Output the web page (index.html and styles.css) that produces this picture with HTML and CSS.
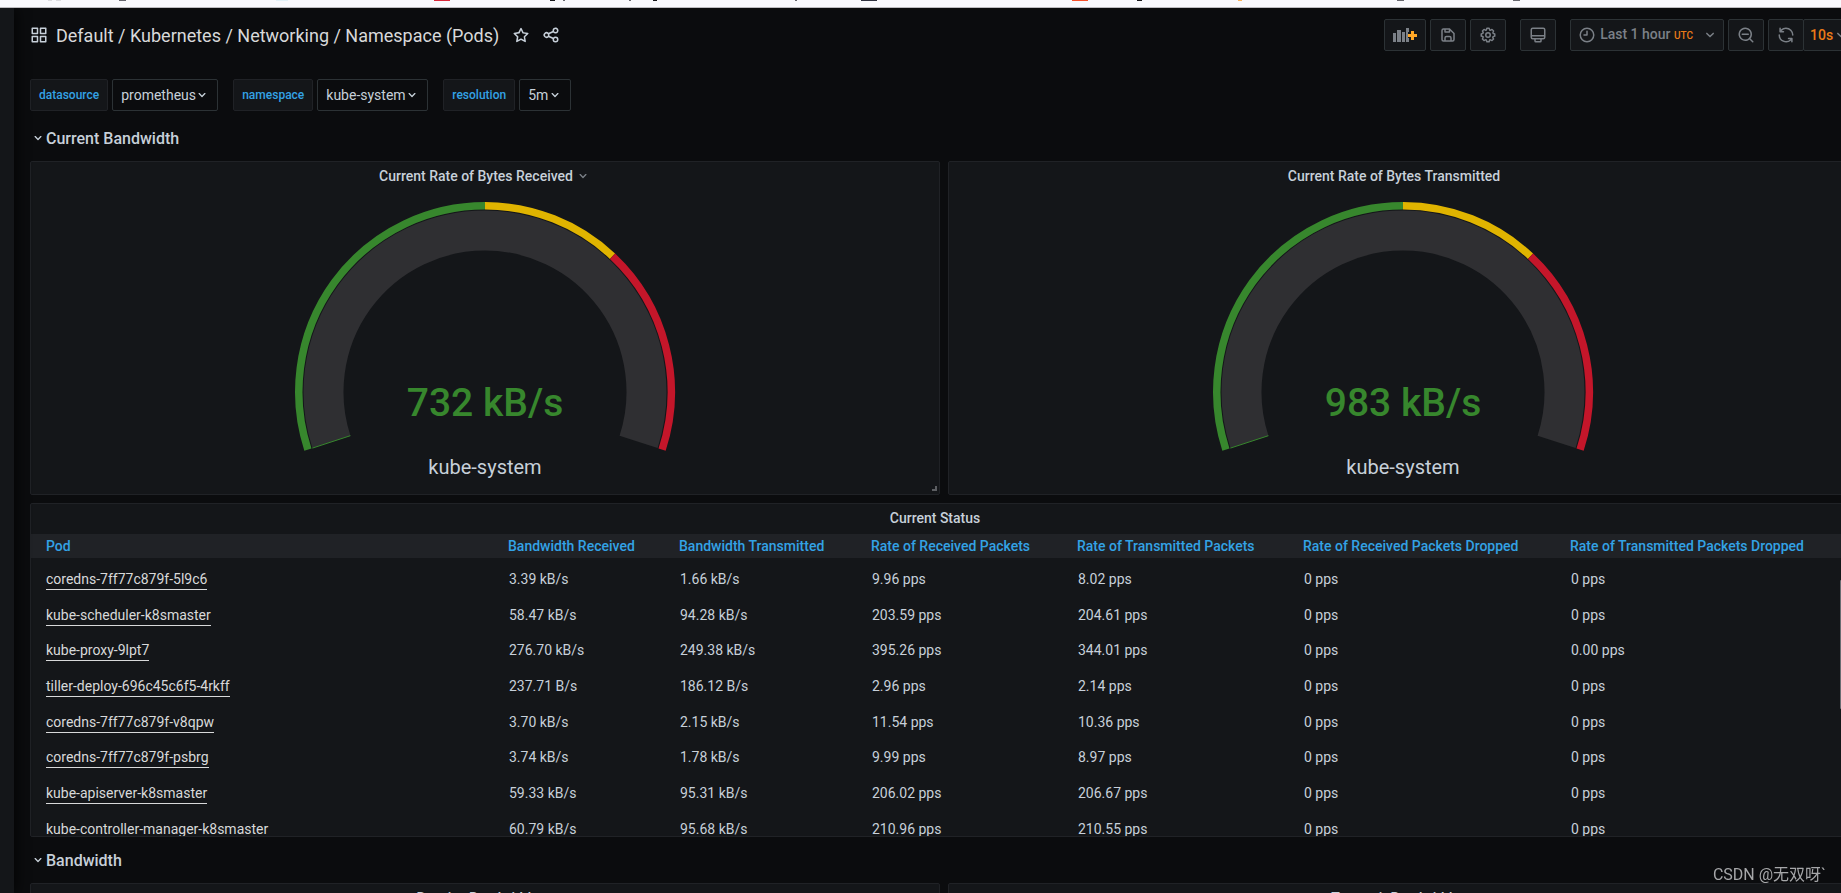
FILE: index.html
```html
<!DOCTYPE html>
<html lang="en">
<head>
<meta charset="utf-8">
<title>Kubernetes / Networking / Namespace (Pods)</title>
<link rel="stylesheet" href="styles.css">
</head>
<body>
<svg class="sprite" aria-hidden="true">
  <symbol id="chevron" viewBox="0 0 24 24"><path d="M17 9.17a1 1 0 0 0-1.41 0L12 12.71 8.46 9.17a1 1 0 0 0-1.41 0 1 1 0 0 0 0 1.42l4.24 4.24a1 1 0 0 0 1.42 0L17 10.59a1 1 0 0 0 0-1.42Z"/></symbol>
  <symbol id="gauge" viewBox="0 0 400 302">
    <g fill="none">
      <path stroke="#2f2f32" stroke-width="40" d="M46.4 249.9A161.5 161.5 0 1 1 353.6 249.9"/>
      <g stroke-width="7.5">
        <path stroke="#37872d" d="M22.9 257.6A186.2 186.2 0 0 1 200 13.8"/>
        <path stroke="#e0b400" d="M200 13.8A186.2 186.2 0 0 1 327.5 64.2"/>
        <path stroke="#c4162a" d="M327.5 64.2A186.2 186.2 0 0 1 377.1 257.6"/>
      </g>
      <path stroke="#37872d" d="M65.4 243.7 27.4 256.1"/>
    </g>
  </symbol>
</svg>
<div class="bookmarks" aria-hidden="true">
  <svg class="bookmark-bits" width="1841" height="1">
    <path fill="#dcdce0" d="M48 0h4v1h-4zM56 0h5v1h-5z"/>
    <path fill="#66666e" d="M119 0h7v1h-7zM563 0h2v1h-2zM629 0h2v1h-2zM795 0h2v1h-2zM1397 0h7v1h-7zM1513 0h7v1h-7z"/>
    <path fill="#e2f1f8" d="M276 0h12v1h-12z"/>
    <path fill="#d9293b" d="M434 0h16v1h-16z"/>
    <path fill="#18181c" d="M550 0h5v1h-5zM653 0h4v1h-4zM1137 0h5v1h-5z"/>
    <path fill="#303240" d="M861 0h16v1h-16z"/>
    <path fill="#f7512c" d="M1072 0h16v1h-16z"/>
    <path fill="#fbb45c" d="M1238 0h4v1h-4z"/>
  </svg>
</div>
<div class="app">
  <aside class="sidebar"></aside>
  <main class="dashboard">
    <header class="navbar">
      <svg class="icon" viewBox="0 0 24 24"><path d="M10 13H3a1 1 0 0 0-1 1v7a1 1 0 0 0 1 1h7a1 1 0 0 0 1-1v-7a1 1 0 0 0-1-1Zm-1 7H4v-5h5ZM21 2h-7a1 1 0 0 0-1 1v7a1 1 0 0 0 1 1h7a1 1 0 0 0 1-1V3a1 1 0 0 0-1-1Zm-1 7h-5V4h5Zm1 4h-7a1 1 0 0 0-1 1v7a1 1 0 0 0 1 1h7a1 1 0 0 0 1-1v-7a1 1 0 0 0-1-1Zm-1 7h-5v-5h5ZM10 2H3a1 1 0 0 0-1 1v7a1 1 0 0 0 1 1h7a1 1 0 0 0 1-1V3a1 1 0 0 0-1-1ZM9 9H4V4h5Z"/></svg>
      <h1 class="page-title"><a href="#">Default</a> / <a href="#">Kubernetes / Networking / Namespace (Pods)</a></h1>
      <button class="plain-button" aria-label="Mark as favorite"><svg class="icon" viewBox="0 0 24 24"><path d="M22 9.67a1 1 0 0 0-.86-.67l-5.69-.83L12.9 3a1 1 0 0 0-1.8 0L8.55 8.16 2.86 9a1 1 0 0 0-.81.68 1 1 0 0 0 .25 1l4.13 4-1 5.68a1 1 0 0 0 1.45 1.07L12 18.76l5.1 2.68a.93.93 0 0 0 .46.12 1 1 0 0 0 .59-.19 1 1 0 0 0 .4-1l-1-5.68 4.13-4a1 1 0 0 0 .32-1.02Zm-6.15 4a1 1 0 0 0-.29.88l.72 4.2-3.76-2a1.06 1.06 0 0 0-.94 0l-3.76 2 .72-4.2a1 1 0 0 0-.29-.88l-3-3 4.21-.61a1 1 0 0 0 .76-.55L12 5.7l1.88 3.82a1 1 0 0 0 .76.55l4.21.61Z"/></svg></button>
      <button class="plain-button" aria-label="Share dashboard"><svg class="icon" viewBox="0 0 24 24"><path d="M18 14a4 4 0 0 0-3.08 1.48l-5.1-2.35a3.64 3.64 0 0 0 0-2.26l5.1-2.35A4 4 0 1 0 14 6a4.17 4.17 0 0 0 .07.71L8.79 9.14a4 4 0 1 0 0 5.72l5.28 2.43A4.17 4.17 0 0 0 14 18a4 4 0 1 0 4-4Zm0-10a2 2 0 1 1-2 2 2 2 0 0 1 2-2ZM6 14a2 2 0 1 1 2-2 2 2 0 0 1-2 2Zm12 6a2 2 0 1 1 2-2 2 2 0 0 1-2 2Z"/></svg></button>
      <div class="toolbar">
        <button class="tool-button add-panel" aria-label="Add panel"><svg class="add-icon" viewBox="0 0 24 14">
          <path fill="#7b8087" d="M0 5h3v9H0zM4 2h4v12H4zM9 4h3v10H9zM13 0h3v4h-1v6h1v4h-3z"/>
          <path fill="#ffa726" d="M18 3h3v3h3v3h-3v3h-3V9h-3V6h3z"/></svg></button>
        <button class="tool-button" aria-label="Save dashboard"><svg class="icon" viewBox="0 0 24 24"><path d="m20.71 9.29-6-6a1 1 0 0 0-.32-.21A1.09 1.09 0 0 0 14 3H6a3 3 0 0 0-3 3v12a3 3 0 0 0 3 3h12a3 3 0 0 0 3-3v-8a1 1 0 0 0-.29-.71ZM9 5h4v2H9Zm6 14H9v-3a1 1 0 0 1 1-1h4a1 1 0 0 1 1 1Zm4-1a1 1 0 0 1-1 1h-1v-3a3 3 0 0 0-3-3h-4a3 3 0 0 0-3 3v3H6a1 1 0 0 1-1-1V6a1 1 0 0 1 1-1h1v3a1 1 0 0 0 1 1h6a1 1 0 0 0 1-1V6.41l4 4Z"/></svg></button>
        <button class="tool-button" aria-label="Dashboard settings"><svg class="icon" viewBox="0 0 24 24"><path d="m21.32 9.55-1.89-.63.89-1.78A1 1 0 0 0 20.13 6L18 3.87a1 1 0 0 0-1.15-.19l-1.78.89-.63-1.89A1 1 0 0 0 13.5 2h-3a1 1 0 0 0-.95.68l-.63 1.89-1.78-.89A1 1 0 0 0 6 3.87L3.87 6a1 1 0 0 0-.19 1.15l.89 1.78-1.89.63a1 1 0 0 0-.68.94v3a1 1 0 0 0 .68.95l1.89.63-.89 1.78A1 1 0 0 0 3.87 18L6 20.13a1 1 0 0 0 1.15.19l1.78-.89.63 1.89a1 1 0 0 0 .95.68h3a1 1 0 0 0 .95-.68l.63-1.89 1.78.89a1 1 0 0 0 1.13-.19L20.13 18a1 1 0 0 0 .19-1.15l-.89-1.78 1.89-.63a1 1 0 0 0 .68-.94v-3a1 1 0 0 0-.68-.95ZM20 12.78l-1.2.4a2 2 0 0 0-1.22 2.88l.57 1.14-1.1 1.1-1.11-.6a2 2 0 0 0-2.88 1.2l-.4 1.1h-1.44l-.4-1.2a2 2 0 0 0-2.88-1.2l-1.14.57-1.1-1.1.6-1.11a2 2 0 0 0-1.2-2.88l-1.1-.3v-1.56l1.2-.4a2 2 0 0 0 1.2-2.88l-.57-1.11 1.1-1.1 1.11.6a2 2 0 0 0 2.88-1.2l.4-1.13h1.56l.4 1.2a2 2 0 0 0 2.88 1.2l1.14-.57 1.1 1.1-.6 1.11a2 2 0 0 0 1.2 2.88l1.2.4ZM12 8a4 4 0 1 0 4 4 4 4 0 0 0-4-4Zm0 6a2 2 0 1 1 2-2 2 2 0 0 1-2 2Z"/></svg></button>
        <button class="tool-button spaced" aria-label="Cycle view mode"><svg class="icon" viewBox="0 0 24 24"><path d="M19 2H5a3 3 0 0 0-3 3v10a3 3 0 0 0 3 3h2v2a2 2 0 0 0 2 2h6a2 2 0 0 0 2-2v-2h2a3 3 0 0 0 3-3V5a3 3 0 0 0-3-3Zm-4 18H9v-2h6Zm5-5a1 1 0 0 1-1 1H5a1 1 0 0 1-1-1v-1h16Zm0-3H4V5a1 1 0 0 1 1-1h14a1 1 0 0 1 1 1Z"/></svg></button>
        <button class="tool-button time-picker spaced"><svg class="icon" viewBox="0 0 24 24"><path d="M12 2a10 10 0 1 0 10 10A10 10 0 0 0 12 2Zm0 18a8 8 0 1 1 8-8 8 8 0 0 1-8 8Zm0-14a1 1 0 0 0-1 1v4H8a1 1 0 0 0 0 2h4a1 1 0 0 0 1-1V7a1 1 0 0 0-1-1Z"/></svg><span>Last 1 hour <span class="utc">UTC</span></span><svg class="icon" viewBox="0 0 24 24"><use href="#chevron"/></svg></button>
        <button class="tool-button" aria-label="Zoom out time range"><svg class="icon" viewBox="0 0 24 24"><path d="m21.71 20.29-3.68-3.67a9 9 0 1 0-1.41 1.41l3.67 3.68a1 1 0 0 0 1.42 0 1 1 0 0 0 0-1.42ZM11 18a7 7 0 1 1 7-7 7 7 0 0 1-7 7Zm4-8H7a1 1 0 0 0 0 2h8a1 1 0 0 0 0-2Z"/></svg></button>
        <div class="refresh">
          <button class="tool-button" aria-label="Refresh dashboard"><svg class="icon" viewBox="0 0 24 24"><path d="M19.91 15.51h-4.53a1 1 0 0 0 0 2h2.4A8 8 0 0 1 4 12a1 1 0 0 0-2 0 10 10 0 0 0 16.88 7.23V21a1 1 0 0 0 2 0v-4.5a1 1 0 0 0-.97-.99ZM12 2a10 10 0 0 0-6.88 2.77V3a1 1 0 0 0-2 0v4.5a1 1 0 0 0 1 1h4.5a1 1 0 0 0 0-2h-2.4A8 8 0 0 1 20 12a1 1 0 0 0 2 0A10 10 0 0 0 12 2Z"/></svg></button>
          <span class="picker interval"><select aria-label="Refresh interval"><option>10s</option></select><svg class="icon" viewBox="0 0 24 24"><use href="#chevron"/></svg></span>
        </div>
      </div>
    </header>

    <div class="variables">
      <div class="variable"><label for="datasource">datasource</label><span class="picker"><select id="datasource"><option>prometheus</option></select><svg class="icon small" viewBox="0 0 24 24"><use href="#chevron"/></svg></span></div>
      <div class="variable"><label for="namespace">namespace</label><span class="picker"><select id="namespace"><option>kube-system</option></select><svg class="icon small" viewBox="0 0 24 24"><use href="#chevron"/></svg></span></div>
      <div class="variable"><label for="resolution">resolution</label><span class="picker"><select id="resolution"><option>5m</option></select><svg class="icon small" viewBox="0 0 24 24"><use href="#chevron"/></svg></span></div>
    </div>

    <div class="grid">
      <h2 class="row-title"><svg class="icon small" viewBox="0 0 24 24"><use href="#chevron"/></svg>Current Bandwidth</h2>

      <section class="panel">
        <h3 class="panel-title">Current Rate of Bytes Received<svg class="icon" viewBox="0 0 24 24"><use href="#chevron"/></svg></h3>
        <svg class="gauge" viewBox="0 0 400 302">
          <use href="#gauge"/>
          <text class="gauge-value" x="200" y="224">732 kB/s</text>
          <text class="gauge-label" x="200" y="282">kube-system</text>
        </svg>
        <span class="resize-handle"></span>
      </section>

      <section class="panel">
        <h3 class="panel-title">Current Rate of Bytes Transmitted<svg class="icon hidden" viewBox="0 0 24 24"><use href="#chevron"/></svg></h3>
        <svg class="gauge" viewBox="0 0 400 302">
          <use href="#gauge"/>
          <text class="gauge-value" x="200" y="224">983 kB/s</text>
          <text class="gauge-label" x="200" y="282">kube-system</text>
        </svg>
      </section>

      <section class="panel wide">
        <h3 class="panel-title">Current Status<svg class="icon hidden" viewBox="0 0 24 24"><use href="#chevron"/></svg></h3>
        <div class="table-scroll">
          <table>
            <colgroup><col><col class="c-received"><col class="c-transmitted"><col class="c-rx-packets"><col class="c-tx-packets"><col class="c-rx-dropped"><col class="c-tx-dropped"></colgroup>
            <thead><tr><th>Pod</th><th>Bandwidth Received</th><th>Bandwidth Transmitted</th><th>Rate of Received Packets</th><th>Rate of Transmitted Packets</th><th>Rate of Received Packets Dropped</th><th>Rate of Transmitted Packets Dropped</th></tr></thead>
            <tbody>
              <tr><td><a href="#">coredns-7ff77c879f-5l9c6</a></td><td>3.39 kB/s</td><td>1.66 kB/s</td><td>9.96 pps</td><td>8.02 pps</td><td>0 pps</td><td>0 pps</td></tr>
              <tr><td><a href="#">kube-scheduler-k8smaster</a></td><td>58.47 kB/s</td><td>94.28 kB/s</td><td>203.59 pps</td><td>204.61 pps</td><td>0 pps</td><td>0 pps</td></tr>
              <tr><td><a href="#">kube-proxy-9lpt7</a></td><td>276.70 kB/s</td><td>249.38 kB/s</td><td>395.26 pps</td><td>344.01 pps</td><td>0 pps</td><td>0.00 pps</td></tr>
              <tr><td><a href="#">tiller-deploy-696c45c6f5-4rkff</a></td><td>237.71 B/s</td><td>186.12 B/s</td><td>2.96 pps</td><td>2.14 pps</td><td>0 pps</td><td>0 pps</td></tr>
              <tr><td><a href="#">coredns-7ff77c879f-v8qpw</a></td><td>3.70 kB/s</td><td>2.15 kB/s</td><td>11.54 pps</td><td>10.36 pps</td><td>0 pps</td><td>0 pps</td></tr>
              <tr><td><a href="#">coredns-7ff77c879f-psbrg</a></td><td>3.74 kB/s</td><td>1.78 kB/s</td><td>9.99 pps</td><td>8.97 pps</td><td>0 pps</td><td>0 pps</td></tr>
              <tr><td><a href="#">kube-apiserver-k8smaster</a></td><td>59.33 kB/s</td><td>95.31 kB/s</td><td>206.02 pps</td><td>206.67 pps</td><td>0 pps</td><td>0 pps</td></tr>
              <tr><td><a href="#">kube-controller-manager-k8smaster</a></td><td>60.79 kB/s</td><td>95.68 kB/s</td><td>210.96 pps</td><td>210.55 pps</td><td>0 pps</td><td>0 pps</td></tr>
            </tbody>
          </table>
        </div>
        <span class="scroll-thumb"></span>
      </section>

      <h2 class="row-title"><svg class="icon small" viewBox="0 0 24 24"><use href="#chevron"/></svg>Bandwidth</h2>

      <section class="panel"><h3 class="panel-title">Receive Bandwidth<svg class="icon hidden" viewBox="0 0 24 24"><use href="#chevron"/></svg></h3></section>
      <section class="panel"><h3 class="panel-title">Transmit Bandwidth<svg class="icon hidden" viewBox="0 0 24 24"><use href="#chevron"/></svg></h3></section>
    </div>
  </main>
</div>
<div class="watermark">CSDN @无双呀`</div>
</body>
</html>
```
FILE: styles.css
```css
* {
  box-sizing: border-box;
}

body {
  display: flex;
  flex-direction: column;
  height: 100vh;
  margin: 0;
  overflow: hidden;
  background: #0b0c0e;
  color: #c7d0d9;
  font: 14px/21px Roboto, sans-serif;
}

h1, h2, h3 {
  margin: 0;
}

a {
  color: inherit;
  text-decoration: none;
}

button, select {
  margin: 0;
  font: inherit;
  cursor: pointer;
}

.sprite {
  position: absolute;
  width: 0;
  height: 0;
}

.icon {
  flex: none;
  width: 18px;
  height: 18px;
  fill: currentColor;
}

.icon.small {
  width: 16px;
  height: 16px;
}

.hidden {
  visibility: hidden;
}

.bookmarks {
  z-index: 2;
  flex: none;
  height: 8px;
  overflow: hidden;
  border-bottom: 1px solid #bdbcc0;
  background: #f9f9fd;
}

.bookmark-bits {
  display: block;
}

.app {
  display: flex;
  flex: 1;
  min-height: 0;
}

.sidebar {
  z-index: 1;
  flex: none;
  width: 14px;
  background: #141619;
  box-shadow: 0 0 16px #000;
}

/* the dashboard runs under the right edge of the window */
.dashboard {
  flex: 1;
  min-width: 0;
  margin-right: -17px;
  padding-left: 16px;
}

.navbar {
  display: flex;
  align-items: center;
  height: 54px;
  margin-bottom: 17px;
}

.page-title {
  margin: 0 13px 0 8px;
  color: #d8d9da;
  font-size: 18px;
  font-weight: 400;
  white-space: nowrap;
}

.plain-button {
  display: flex;
  margin-right: 12px;
  padding: 0;
  border: 0;
  background: none;
  color: #c7d0d9;
}

.toolbar {
  display: flex;
  gap: 4px;
  margin-left: auto;
}

.tool-button {
  display: flex;
  align-items: center;
  justify-content: center;
  width: 36px;
  height: 32px;
  padding: 0;
  border: 1px solid #2c3235;
  border-radius: 2px;
  background: #141619;
  color: #7b8087;
}

.add-panel {
  width: 42px;
}

.add-icon {
  width: 24px;
  height: 14px;
}

.spaced {
  margin-left: 10px;
}

.time-picker {
  gap: 4px;
  width: auto;
  padding: 0 4px 0 7px;
  font-weight: 500;
}

.time-picker .icon:last-child {
  margin-left: 4px;
}

.utc {
  color: #eb7b18;
  font-size: 10px;
}

.refresh {
  display: flex;
}

.picker {
  display: grid;
  align-items: center;
}

.picker > * {
  grid-area: 1 / 1;
}

.picker > .icon {
  justify-self: end;
  margin-right: 8px;
  pointer-events: none;
}

.picker select {
  height: 32px;
  padding: 0 21px 0 8px;
  border: 1px solid #2c3235;
  border-radius: 2px;
  background: #0b0c0e;
  color: #c7d0d9;
  appearance: none;
}

.interval {
  margin-left: -1px;
  color: #7b8087;
}

.picker.interval select {
  padding: 0 23px 0 6px;
  background: #141619;
  color: #eb7b18;
  font-weight: 500;
}

.variables {
  display: flex;
  gap: 15px;
  margin-bottom: 12px;
}

.variable {
  display: flex;
  gap: 4px;
}

.variable label {
  display: flex;
  align-items: center;
  height: 32px;
  padding: 0 8px;
  border: 1px solid #202226;
  border-radius: 2px;
  background: #141619;
  color: #33a2e5;
  font-size: 12px;
  font-weight: 500;
}

.grid {
  display: grid;
  grid-template-columns: 1fr 1fr;
  grid-template-rows: 30px 334px 334px 30px 334px;
  gap: 8px;
}

.row-title {
  display: flex;
  grid-column: 1 / -1;
  align-items: center;
  color: #c7d0d9;
  font-size: 16px;
  font-weight: 500;
}

.panel {
  position: relative;
  display: flex;
  flex-direction: column;
  min-width: 0;
  border: 1px solid #202226;
  border-radius: 2px;
  background: #141619;
}

.panel.wide {
  grid-column: 1 / -1;
}

.panel-title {
  display: flex;
  flex: none;
  align-items: center;
  justify-content: center;
  gap: 2px;
  height: 28px;
  margin-bottom: 2px;
  font-size: 14px;
  font-weight: 500;
}

.panel-title .icon {
  width: 16px;
  height: 16px;
  color: #7b8087;
}

.gauge {
  display: block;
  width: 100%;
  height: 302px;
}

.gauge text {
  text-anchor: middle;
}

.gauge-value {
  fill: #37872d;
  font-size: 39px;
  font-weight: 500;
}

.gauge-label {
  fill: #c7d0d9;
  font-size: 20px;
}

.resize-handle {
  position: absolute;
  right: 2px;
  bottom: 3px;
  width: 5px;
  height: 5px;
  border: solid #5c5e62;
  border-width: 0 2px 2px 0;
}

.table-scroll {
  flex: 1;
  min-height: 0;
  overflow: hidden;
}

table {
  width: 100%;
  border-spacing: 0;
  table-layout: fixed;
}

.c-received { width: 171px; }
.c-transmitted { width: 192px; }
.c-rx-packets { width: 206px; }
.c-tx-packets { width: 226px; }
.c-rx-dropped { width: 267px; }
.c-tx-dropped { width: 302px; }

th, td {
  padding: 0 0 0 15px;
  text-align: left;
  white-space: nowrap;
}

td + td {
  padding-left: 16px;
}

th {
  height: 27px;
  border-bottom: 3px solid transparent;
  background: #202226;
  background-clip: padding-box;
  color: #33a2e5;
  font-weight: 500;
}

td {
  height: 36px;
}

tr:nth-child(3n) td {
  height: 35px;
}

td a {
  padding-bottom: 2px;
  border-bottom: 1px solid #d8d9da;
  color: #d8d9da;
}

.scroll-thumb {
  position: absolute;
  top: 76px;
  right: 9px;
  width: 8px;
  height: 129px;
  border-radius: 1px;
  background: #6a6d72;
}

.watermark {
  position: fixed;
  right: 15px;
  bottom: 6px;
  color: #a6a7a9;
  font: 16px/24px Roboto, "Noto Sans CJK SC", sans-serif;
}
```
